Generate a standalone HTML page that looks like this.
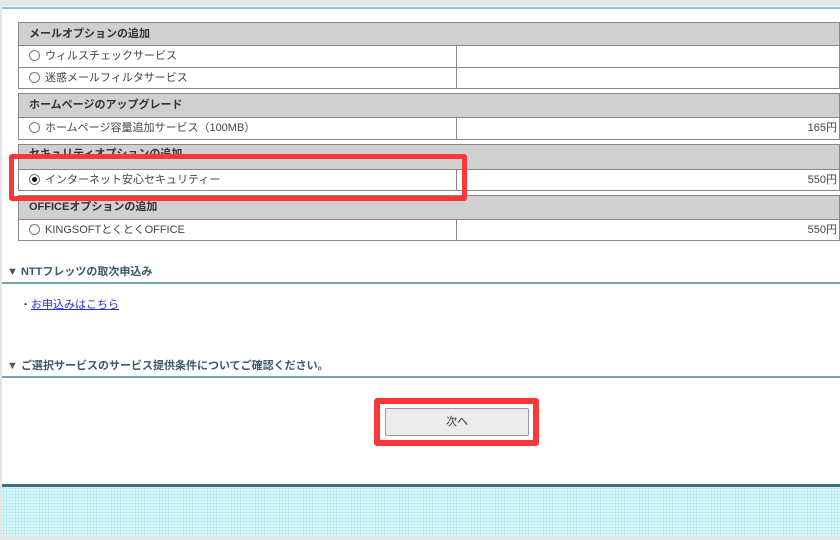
<html><head><style>
body{margin:0;width:840px;height:540px;position:relative;overflow:hidden;background:#fff;font-family:"Liberation Sans","Noto Sans CJK JP",sans-serif;}
.a{position:absolute;box-sizing:border-box}
.h{background:#d0d0d0;border:1px solid #888;font-size:11px;font-weight:bold;color:#333;padding-left:10px;line-height:22px}
.r{background:#fff;border:1px solid #888;border-top:none;font-size:11px;color:#444}
.r .l{position:absolute;left:10px;top:0;line-height:20px}
.r .d{position:absolute;left:437px;top:0;bottom:0;border-left:1px solid #888}
.r .p{position:absolute;right:2px;top:0;line-height:20px}
.rad{display:inline-block;width:11px;height:11px;border:1px solid #777;border-radius:50%;vertical-align:-2px;margin-right:5px;background:#fff;box-sizing:border-box}
.sel{position:relative}.sel:after{content:"";position:absolute;left:2px;top:2px;width:5px;height:5px;border-radius:50%;background:#111}
.sec{font-size:11px;font-weight:bold;color:#3a5a6a}
</style></head><body>
<div class="a" style="left:0;top:0;width:840px;height:6px;background:#e6e6e6"></div>
<div class="a" style="left:0;top:0;width:2px;height:540px;background:#e6e6e6"></div>
<div class="a" style="left:0;top:536px;width:840px;height:4px;background:#e6e6e6"></div>
<div class="a" style="left:2px;top:7px;width:838px;height:2px;background:#8cc2cc"></div>

<div class="a h" style="left:18px;top:22px;width:822px;height:24px">メールオプションの追加</div>
<div class="a r" style="left:18px;top:46px;width:822px;height:22px"><span class="l"><span class="rad"></span>ウィルスチェックサービス</span><span class="d"></span></div>
<div class="a r" style="left:18px;top:67px;width:822px;height:22px;border-top:1px solid #888"><span class="l"><span class="rad"></span>迷惑メールフィルタサービス</span><span class="d"></span></div>

<div class="a h" style="left:18px;top:93px;width:822px;height:25px">ホームページのアップグレード</div>
<div class="a r" style="left:18px;top:118px;width:822px;height:22px"><span class="l"><span class="rad"></span>ホームページ容量追加サービス（100MB）</span><span class="d"></span><span class="p">165円</span></div>

<div class="a h" style="left:18px;top:144px;width:822px;height:26px;line-height:18px">セキュリティオプションの追加</div>
<div class="a r" style="left:18px;top:169px;width:822px;height:22px;border-top:1px solid #888"><span class="l"><span class="rad sel"></span>インターネット安心セキュリティー</span><span class="d"></span><span class="p">550円</span></div>

<div class="a h" style="left:18px;top:195px;width:822px;height:25px">OFFICEオプションの追加</div>
<div class="a r" style="left:18px;top:220px;width:822px;height:21px"><span class="l"><span class="rad"></span>KINGSOFTとくとくOFFICE</span><span class="d"></span><span class="p">550円</span></div>

<div class="a" style="left:9px;top:154px;width:458px;height:47px;border:5px solid #fc3737;border-radius:3px"></div>

<div class="a sec" style="left:7px;top:263px">▼ NTTフレッツの取次申込み</div>
<div class="a" style="left:2px;top:282px;width:838px;height:2px;background:#7aa4b0"></div>
<div class="a" style="left:20px;top:296px;font-size:11px;color:#444">・<span style="color:#2a2ad8;text-decoration:underline">お申込みはこちら</span></div>

<div class="a sec" style="left:7px;top:357px">▼ ご選択サービスのサービス提供条件についてご確認ください。</div>
<div class="a" style="left:2px;top:376px;width:838px;height:2px;background:#7aa4b0"></div>

<div class="a" style="left:374px;top:398px;width:165px;height:48px;border:6px solid #fc3737;border-radius:3px"></div>
<div class="a" style="left:385px;top:408px;width:144px;height:28px;background:#ececec;border:1px solid #999;border-radius:2px;font-size:11px;text-align:center;line-height:26px;color:#333">次へ</div>

<div class="a" style="left:2px;top:484px;width:838px;height:3px;background:#3d6f7c"></div>
<div class="a" style="left:2px;top:487px;width:838px;height:49px;background-color:#d7f7fb;background-image:radial-gradient(#aee6ee 40%,transparent 45%);background-size:3px 3px"></div>
</body></html>
